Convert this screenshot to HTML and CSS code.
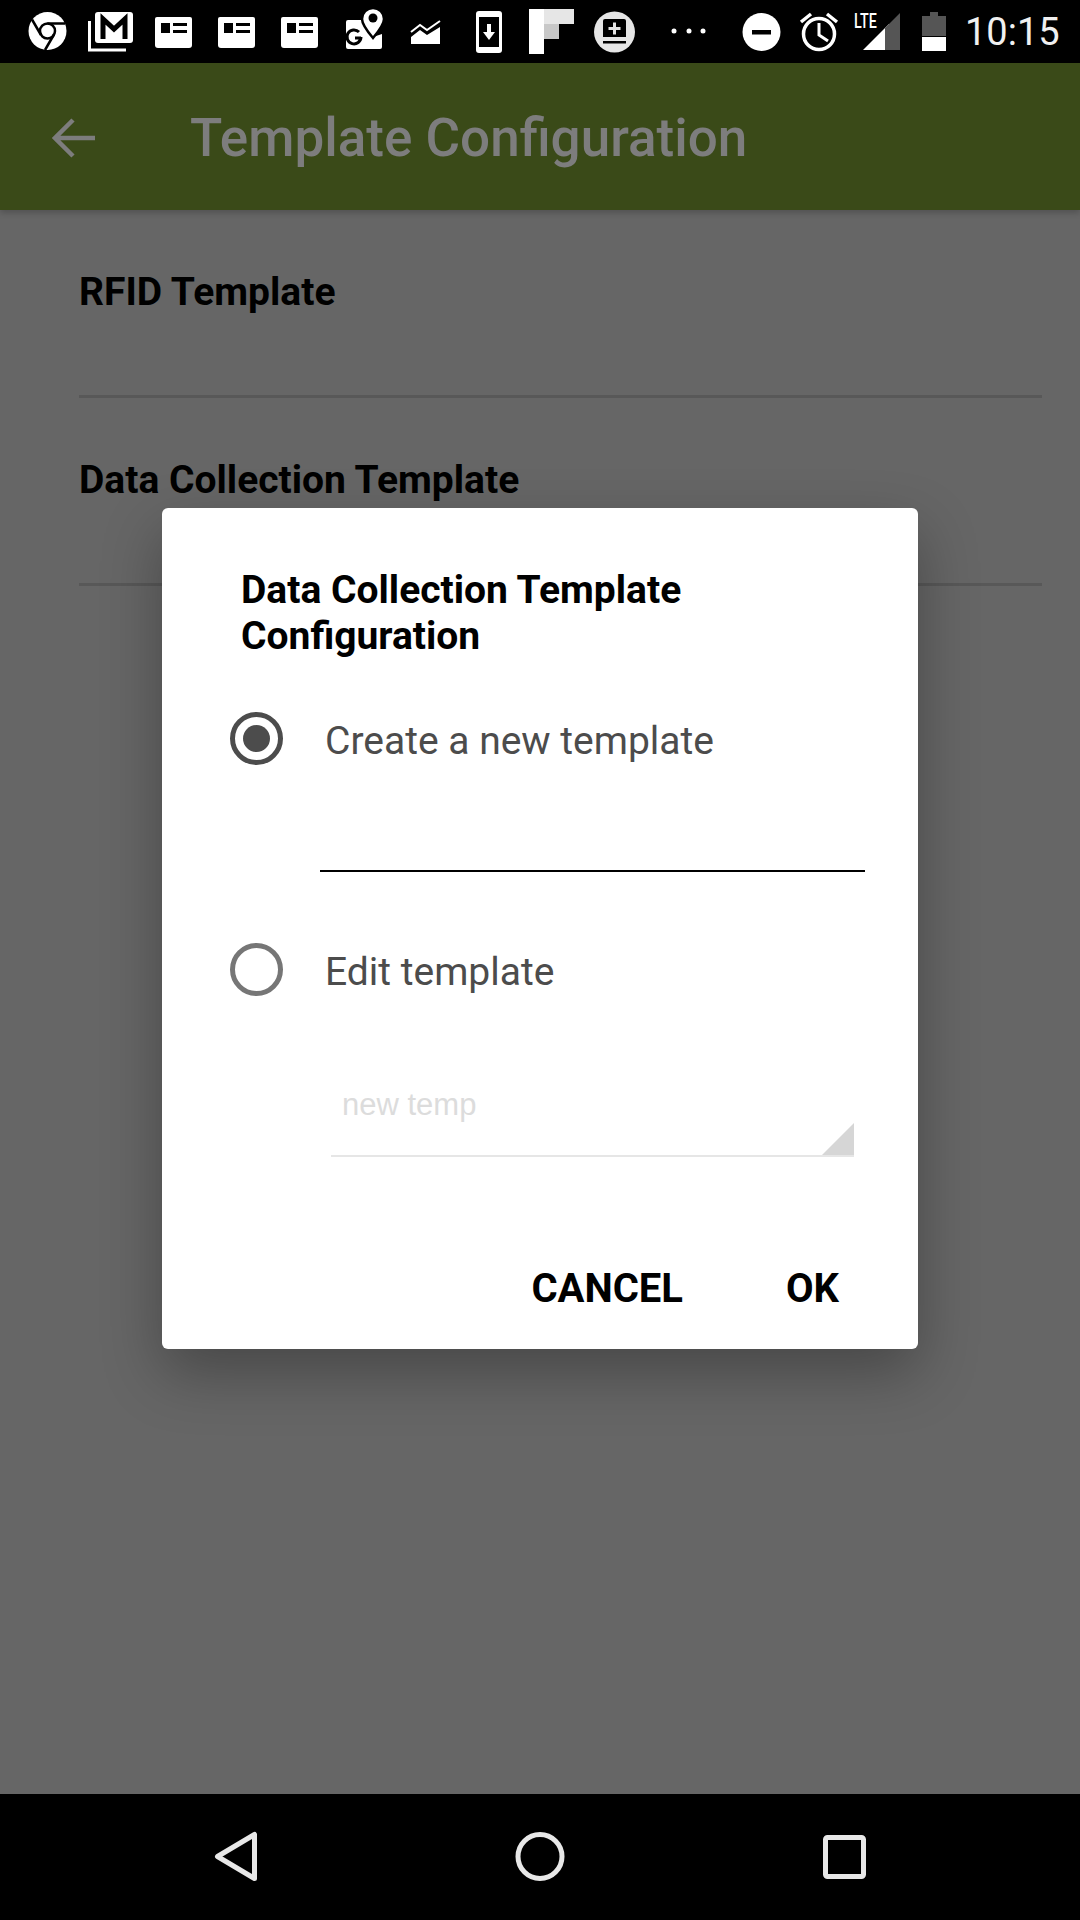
FILE: index.html
```html
<!DOCTYPE html>
<html lang="en">
  <head>
    <meta charset="UTF-8" />
    <title>Template Configuration</title>
    <link rel="stylesheet" href="styles.css">
  </head>
  <body>
    <div id="app">
      <!-- status bar -->
      <div class="status-bar">
        <svg class="slot" viewBox="16 0 63 63">
          <circle cx="47.5" cy="31" r="19" fill="#fff"/>
          <circle cx="47.5" cy="31" r="7.5" fill="none" stroke="#000" stroke-width="2.5"/>
          <path d="M47.5 23.5H65M41 35L32 19.5M54 34.5L45 50" fill="none" stroke="#000" stroke-width="2.5"/>
        </svg>
        <svg class="slot" viewBox="79 0 63 63">
          <rect x="95" y="12" width="38" height="31" rx="3" fill="#fff"/>
          <path d="M103 39V19L114 29L125 19V39" fill="none" stroke="#000" stroke-width="5"/>
          <path d="M89.500 21V50H126" fill="none" stroke="#fff" stroke-width="3"/>
        </svg>
        <svg class="slot" viewBox="142 0 63 63">
          <use href="#news"/>
        </svg>
        <svg class="slot" viewBox="205 0 63 63">
          <use href="#news" x="63"/>
        </svg>
        <svg class="slot" viewBox="268 0 63 63">
          <use href="#news" x="126"/>
        </svg>
        <svg class="slot" viewBox="331 0 63 63">
          <path d="M348 20H366L378 40V47Q378 49 376 49H348Q346 49 346 47V22Q346 20 348 20Z" fill="#fff"/>
          <path d="M373 37L382 34V47Q382 49 380 49H370Z" fill="#fff"/>
          <path d="M361 37A7 7 0 1 1 359 32M355 38H361" fill="none" stroke="#000" stroke-width="3"/>
          <path d="M373 38Q362 25 362 19A11 11 0 0 1 384 19Q384 25 373 38Z" fill="#fff" stroke="#000" stroke-width="2.500"/>
          <circle cx="373" cy="18" r="4.500" fill="#000"/>
        </svg>
        <svg class="slot" viewBox="394 0 63 63">
          <path d="M411 37L420 30L427 35L440 27V44H411Z" fill="#fff"/>
          <path d="M411 32L420 25L427 30L440 21" fill="none" stroke="#fff" stroke-width="2"/>
        </svg>
        <svg class="slot" viewBox="457 0 63 63">
          <rect x="476" y="11" width="26" height="42" rx="3" fill="#fff"/>
          <rect x="479" y="17" width="20" height="30" fill="#000"/>
          <path d="M487 24H491V32H495L489 40L483 32H487Z" fill="#fff"/>
        </svg>
        <svg class="slot" viewBox="520 0 63 63">
          <rect x="529" y="9" width="15" height="45" fill="#fff"/>
          <rect x="544" y="9" width="30" height="15" fill="#e6e6e6"/>
          <rect x="544" y="24" width="15" height="15" fill="#c8c8c8"/>
        </svg>
        <svg class="slot" viewBox="583 0 63 63">
          <circle cx="614.500" cy="32" r="20.500" fill="#e6e6e6"/>
          <path d="M605 19H624Q626 19 626 21V37H603V21Q603 19 605 19Z" fill="#000"/>
          <path d="M613 22.500H616V27H620.500V30H616V34.500H613V30H608.500V27H613Z" fill="#e6e6e6"/>
          <rect x="603" y="41" width="23" height="2.500" fill="#000"/>
        </svg>
        <svg class="slot-dots" viewBox="646 0 90 63">
          <circle cx="674" cy="31" r="2.500" fill="#fff"/>
          <circle cx="689" cy="31" r="2.500" fill="#fff"/>
          <circle cx="703" cy="31" r="2.500" fill="#fff"/>
        </svg>
        <svg class="slot-dnd" viewBox="736 0 52 63">
          <circle cx="761.500" cy="32" r="19" fill="#fff"/>
          <rect x="752" y="30" width="19" height="4.500" fill="#000"/>
        </svg>
        <svg class="slot-alarm" viewBox="788 0 62 63">
          <circle cx="819" cy="34" r="15.500" fill="none" stroke="#fff" stroke-width="3.500"/>
          <path d="M819 23V35L828 41" fill="none" stroke="#fff" stroke-width="3"/>
          <path d="M801 22L811 14M837 22L827 14" fill="none" stroke="#fff" stroke-width="3.500"/>
        </svg>
        <div class="slot-signal">
          <span class="lte">LTE</span>
          <svg class="signal-icon" viewBox="863 0 37 63">
          <path d="M863 50L889 24V50Z" fill="#fff"/>
          <path d="M885 28L900 13V50H885Z" fill="#555"/>
          </svg>
        </div>
        <svg class="slot-battery" viewBox="904 0 60 63">
          <path d="M922 16H930V12H938V16H946V36H922Z" fill="#555"/>
          <rect x="922" y="37" width="24" height="14" fill="#fff"/>
        </svg>
        <span class="clock">10:15</span>
      </div>

      <!-- defs for the repeated news icon -->
      <svg class="defs" aria-hidden="true">
        <defs>
          <g id="news">
            <path d="M157 17H190Q192 17 192 19V45Q192 48 189 48H158Q155 48 155 45V19Q155 17 157 17Z" fill="#fff"/>
            <rect x="161" y="23" width="9" height="10" fill="#000"/>
            <rect x="173" y="23" width="14" height="3" fill="#000"/>
            <rect x="173" y="30" width="14" height="3" fill="#000"/>
          </g>
        </defs>
      </svg>

      <!-- app bar -->
      <div class="app-bar">
        <svg class="back" viewBox="0 0 44 42">
          <path d="M43 21H4M21 3L3 21L21 39" fill="none" stroke="#7d7d7d" stroke-width="4.500"/>
        </svg>
        <span class="app-title">Template Configuration</span>
      </div>

      <!-- settings list -->
      <div class="content">
        <div class="field">
          <div class="field-label">RFID Template</div>
        </div>
        <div class="field">
          <div class="field-label">Data Collection Template</div>
        </div>
      </div>

      <!-- navigation bar -->
      <div class="nav-bar">
        <svg class="nav-icon" viewBox="0 0 60 60">
          <path d="M49.500 7.500V51.500L12.500 29.500Z" fill="none" stroke="#e8e8e8" stroke-width="5" stroke-linejoin="round"/>
        </svg>
        <svg class="nav-icon" viewBox="0 0 60 60">
          <circle cx="30" cy="29.500" r="22" fill="none" stroke="#e8e8e8" stroke-width="5"/>
        </svg>
        <svg class="nav-icon" viewBox="0 0 60 60">
          <rect x="10.500" y="10.500" width="38" height="39" rx="2" fill="none" stroke="#e8e8e8" stroke-width="5"/>
        </svg>
      </div>
    </div>

    <!-- dialog -->
    <div class="dialog" role="dialog" aria-labelledby="dialogTitle">
      <h2 class="dialog-title" id="dialogTitle">Data Collection Template Configuration</h2>
      <label class="radio-row">
        <span class="radio checked"></span>
        <span class="radio-label">Create a new template</span>
      </label>
      <div class="name-input"></div>
      <label class="radio-row edit-row">
        <span class="radio"></span>
        <span class="radio-label">Edit template</span>
      </label>
      <div class="spinner">
        <span class="spinner-text">new temp</span>
        <span class="spinner-arrow"></span>
      </div>
      <div class="dialog-actions">
        <button class="action cancel">CANCEL</button>
        <button class="action">OK</button>
      </div>
    </div>
  </body>
</html>
```

FILE: styles.css
```css
* {
  box-sizing: border-box;
  margin: 0;
  padding: 0;
}

html,
body {
  height: 100%;
  font-family: Roboto, sans-serif;
  background-color: #666;
}

#app {
  height: 1920px;
  display: flex;
  flex-direction: column;
}

/* status bar */
.status-bar {
  height: 63px;
  flex: none;
  background-color: #000;
  display: flex;
  align-items: center;
  padding-left: 16px;
}

.status-bar svg {
  height: 63px;
  flex: none;
}

.slot {
  width: 63px;
}

.slot-dots {
  width: 90px;
}

.slot-dnd {
  width: 52px;
}

.slot-alarm {
  width: 62px;
}

.slot-signal {
  width: 54px;
  height: 63px;
  flex: none;
  position: relative;
}

.lte {
  position: absolute;
  left: 4px;
  top: 11px;
  font-size: 21px;
  font-weight: 500;
  line-height: 21px;
  color: #fff;
  transform: scaleX(0.68);
  transform-origin: left top;
}

.signal-icon {
  position: absolute;
  left: 13px;
  top: 0;
  width: 37px;
}

.slot-battery {
  width: 60px;
}

.clock {
  font-size: 38px;
  color: #f0f0f0;
  margin-left: 1px;
}

.defs {
  position: absolute;
  width: 0;
  height: 0;
}

/* app bar */
.app-bar {
  height: 147px;
  flex: none;
  background-color: #3a4a18;
  display: flex;
  align-items: center;
  padding: 3px 0 0 52px;
  box-shadow: 0 3px 6px rgba(0, 0, 0, 0.2);
  position: relative;
}

.back {
  width: 44px;
  height: 42px;
  margin-right: 94px;
}

.app-title {
  font-size: 53px;
  font-weight: 500;
  color: #7d7d7d;
}

/* settings list */
.content {
  flex: 1;
  padding: 58px 38px 0 79px;
}

.field {
  height: 130px;
  border-bottom: 3px solid #585858;
}

.field-label {
  font-size: 39px;
  font-weight: 700;
  line-height: 48px;
  color: #000;
}

.field + .field {
  height: 188px;
  padding-top: 58px;
}

/* navigation bar */
.nav-bar {
  height: 126px;
  flex: none;
  background-color: #000;
  display: flex;
  align-items: center;
  justify-content: space-between;
  padding: 0 205px;
}

.nav-icon {
  width: 60px;
  height: 60px;
}

/* dialog */
.dialog {
  position: absolute;
  left: 162px;
  top: 508px;
  width: 756px;
  height: 841px;
  background-color: #fff;
  border-radius: 6px;
  box-shadow: 0 24px 60px rgba(0, 0, 0, 0.3);
  padding: 59px 40px 0 79px;
  display: flex;
  flex-direction: column;
}

.dialog-title {
  font-size: 39px;
  font-weight: 700;
  line-height: 46px;
  color: #000;
  width: 500px;
}

.radio-row {
  display: flex;
  align-items: center;
  margin-top: 53px;
  margin-left: -11px;
}

.radio {
  width: 53px;
  height: 53px;
  border: 5px solid #767676;
  border-radius: 50%;
  flex: none;
  margin-right: 42px;
  display: flex;
  align-items: center;
  justify-content: center;
}

.radio.checked {
  border-color: #4c4c4c;
}

.radio.checked::after {
  content: "";
  width: 27px;
  height: 27px;
  border-radius: 50%;
  background-color: #4c4c4c;
}

.radio-label {
  font-size: 39px;
  color: #4c4c4c;
  padding-top: 5px;
}

.name-input {
  margin: 0 13px 0 79px;
  height: 107px;
  border-bottom: 2px solid #000;
}

.edit-row {
  margin-top: 71px;
}

.spinner {
  margin: 91px 24px 0 90px;
  height: 70px;
  border-bottom: 2px solid #e6e6e6;
  position: relative;
  padding-left: 11px;
}

.spinner-text {
  font-family: "Liberation Sans", sans-serif;
  font-size: 31px;
  color: #dcdcdc;
}

.spinner-arrow {
  position: absolute;
  right: 0;
  bottom: 0;
  width: 0;
  height: 0;
  border-left: 32px solid transparent;
  border-bottom: 32px solid #d6d6d6;
}

.dialog-actions {
  display: flex;
  justify-content: flex-end;
  margin-top: auto;
  padding: 0 39px 37px 0;
}

.action {
  font-family: Roboto, sans-serif;
  font-size: 40px;
  font-weight: 700;
  color: #000;
  background: none;
  border: none;
}

.cancel {
  margin-right: 103px;
}
```
